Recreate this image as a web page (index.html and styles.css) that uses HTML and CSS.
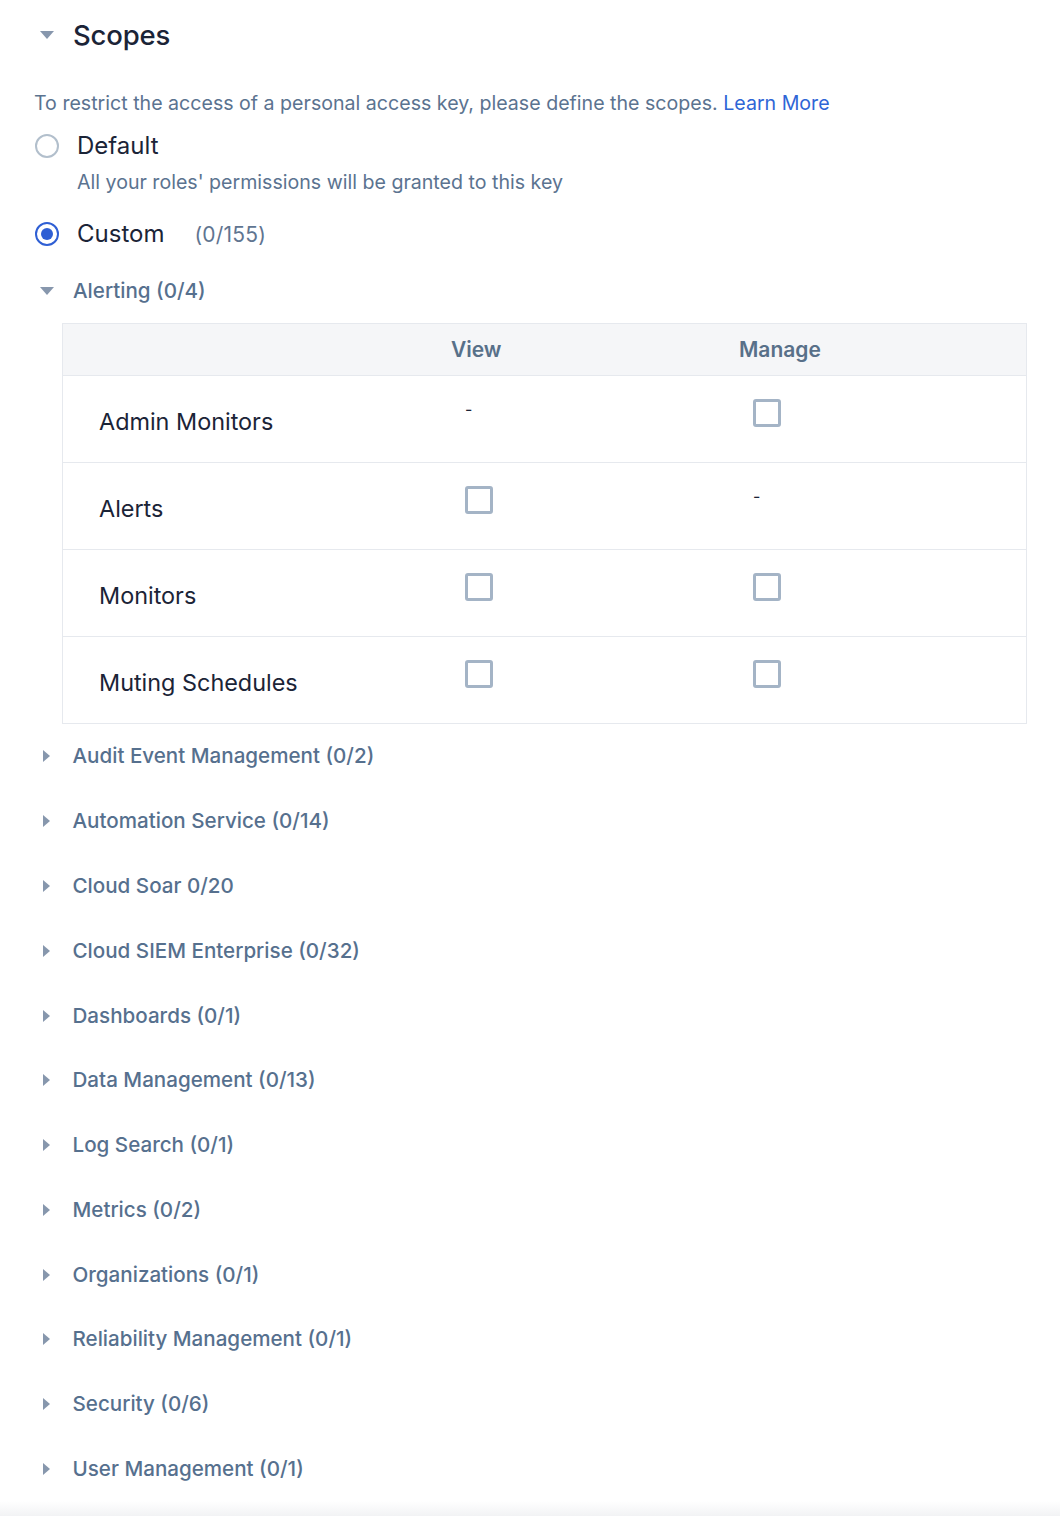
FILE: index.html
```html
<!DOCTYPE html>
<html lang="en">
<head>
<meta charset="utf-8">
<title>Scopes</title>
<link rel="stylesheet" href="styles.css">
</head>
<body>
<section class="scopes">
  <div class="head">
    <span class="caret caret-down"></span>
    <h2 class="title">Scopes</h2>
  </div>
  <p class="desc">To restrict the access of a personal access key, please define the scopes. <a class="link" href="#">Learn More</a></p>

  <div class="radio-row">
    <span class="radio"></span>
    <span class="radio-label">Default</span>
  </div>
  <p class="radio-help">All your roles' permissions will be granted to this key</p>

  <div class="radio-row radio-row-custom">
    <span class="radio radio-checked"></span>
    <span class="radio-label">Custom</span>
    <span class="count">(0/155)</span>
  </div>

  <div class="group group-open">
    <span class="caret caret-down"></span>
    <span class="group-label">Alerting (0/4)</span>
  </div>

  <div class="table">
    <div class="row row-head">
      <div class="cell cell-label"></div>
      <div class="cell cell-head">View</div>
      <div class="cell cell-head">Manage</div>
    </div>
    <div class="row">
      <div class="cell cell-label">Admin Monitors</div>
      <div class="cell cell-ctrl"><span class="dash">-</span></div>
      <div class="cell cell-ctrl"><span class="checkbox"></span></div>
    </div>
    <div class="row">
      <div class="cell cell-label">Alerts</div>
      <div class="cell cell-ctrl"><span class="checkbox"></span></div>
      <div class="cell cell-ctrl"><span class="dash">-</span></div>
    </div>
    <div class="row">
      <div class="cell cell-label">Monitors</div>
      <div class="cell cell-ctrl"><span class="checkbox"></span></div>
      <div class="cell cell-ctrl"><span class="checkbox"></span></div>
    </div>
    <div class="row row-last">
      <div class="cell cell-label">Muting Schedules</div>
      <div class="cell cell-ctrl"><span class="checkbox"></span></div>
      <div class="cell cell-ctrl"><span class="checkbox"></span></div>
    </div>
  </div>

  <ul class="groups">
    <li class="group"><span class="caret caret-right"></span><span class="group-label">Audit Event Management (0/2)</span></li>
    <li class="group"><span class="caret caret-right"></span><span class="group-label">Automation Service (0/14)</span></li>
    <li class="group"><span class="caret caret-right"></span><span class="group-label">Cloud Soar 0/20</span></li>
    <li class="group"><span class="caret caret-right"></span><span class="group-label">Cloud SIEM Enterprise (0/32)</span></li>
    <li class="group"><span class="caret caret-right"></span><span class="group-label">Dashboards (0/1)</span></li>
    <li class="group"><span class="caret caret-right"></span><span class="group-label">Data Management (0/13)</span></li>
    <li class="group"><span class="caret caret-right"></span><span class="group-label">Log Search (0/1)</span></li>
    <li class="group"><span class="caret caret-right"></span><span class="group-label">Metrics (0/2)</span></li>
    <li class="group"><span class="caret caret-right"></span><span class="group-label">Organizations (0/1)</span></li>
    <li class="group"><span class="caret caret-right"></span><span class="group-label">Reliability Management (0/1)</span></li>
    <li class="group"><span class="caret caret-right"></span><span class="group-label">Security (0/6)</span></li>
    <li class="group"><span class="caret caret-right"></span><span class="group-label">User Management (0/1)</span></li>
  </ul>
</section>
<div class="footer-shade"></div>
</body>
</html>
```
FILE: styles.css
```css
* { box-sizing: border-box; }

html, body {
  margin: 0;
  padding: 0;
  background: #ffffff;
}

body {
  font-family: Inter, "Noto Sans", "Liberation Sans", sans-serif;
  color: #1b2437;
  width: 1060px;
  overflow: hidden;
}

.scopes {
  padding: 17px 33px 0 34px;
}

.head {
  display: flex;
  align-items: center;
  height: 36px;
}

.title {
  margin: 0 0 0 19px;
  font-size: 27.5px;
  font-weight: 500;
  line-height: 36px;
  color: #1b2437;
  letter-spacing: -0.2px;
}

.caret {
  display: inline-block;
  width: 0;
  height: 0;
  flex: none;
}

.caret-down {
  margin-left: 6px;
  border-left: 7px solid transparent;
  border-right: 7px solid transparent;
  border-top: 8px solid #8797ad;
}

.caret-right {
  margin-left: 9px;
  border-top: 6.5px solid transparent;
  border-bottom: 6.5px solid transparent;
  border-left: 7.5px solid #8797ad;
}

.desc {
  margin: 36px 0 0 0;
  font-size: 19.6px;
  line-height: 28px;
  color: #5b7390;
  letter-spacing: 0;
}

.link {
  color: #2f66d6;
  text-decoration: none;
}

.radio-row {
  display: flex;
  align-items: center;
  height: 32px;
  margin-top: 13px;
  padding-left: 1px;
}

.radio-row-custom {
  margin-top: 23px;
}

.radio {
  width: 24px;
  height: 24px;
  border-radius: 50%;
  border: 2px solid #b2bfcc;
  flex: none;
  position: relative;
}

.radio-checked {
  border-color: #2f5fd4;
}

.radio-checked::after {
  content: "";
  position: absolute;
  left: 4px;
  top: 4px;
  width: 12px;
  height: 12px;
  border-radius: 50%;
  background: #2f5fd4;
}

.radio-label {
  margin-left: 18px;
  font-size: 24px;
  line-height: 32px;
  color: #1b2437;
  letter-spacing: 0;
}

.count {
  margin-left: 30px;
  font-size: 21px;
  color: #5f7591;
  letter-spacing: 0.2px;
}

.radio-help {
  margin: 7px 0 0 43px;
  font-size: 19.6px;
  line-height: 26px;
  color: #5b7390;
  letter-spacing: 0;
}

.group {
  display: flex;
  align-items: center;
  line-height: 28px;
}

.group-open {
  margin-top: 27px;
}

.group-label {
  margin-left: 19px;
  font-size: 20.6px;
  font-weight: 500;
  color: #56708e;
  letter-spacing: 0;
}

.groups .group-label {
  margin-left: 22.5px;
}

.table {
  margin: 18px 0 0 28px;
  border: 1px solid #e6e9ee;
  width: 965px;
}

.row {
  display: grid;
  grid-template-columns: 388px 288px 1fr;
  height: 87px;
  border-bottom: 1px solid #e6e9ee;
}

.row-last {
  height: 86px;
  border-bottom: none;
}

.row-head {
  height: 52px;
  background: #f5f6f8;
}

.cell-head {
  font-size: 21px;
  font-weight: 600;
  color: #587089;
  line-height: 51px;
  letter-spacing: 0;
}

.cell-label {
  padding-left: 36px;
  display: flex;
  align-items: center;
  padding-top: 4px;
  font-size: 23.4px;
  color: #1b2437;
  letter-spacing: 0;
}

.cell-ctrl {
  padding: 23px 0 0 14px;
}

.checkbox {
  display: block;
  width: 28px;
  height: 28px;
  border: 3px solid #a4b4c6;
  border-radius: 3px;
  background: #ffffff;
}

.dash {
  display: block;
  font-size: 16px;
  line-height: 20px;
  color: #1b2437;
}

.groups {
  list-style: none;
  margin: 0;
  padding: 0;
}

.groups .group {
  padding: 18.4px 0;
}

.footer-shade {
  height: 16px;
  margin-top: 0;
  background: linear-gradient(#ffffff, #f1f2f4);
}
```
